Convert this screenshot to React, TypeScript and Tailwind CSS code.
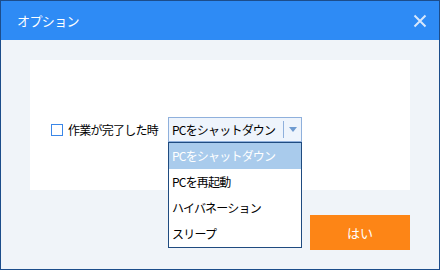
import React from 'react';

const options = ['PCをシャットダウン', 'PCを再起動', 'ハイバネーション', 'スリープ'];

export default function App() {
  return (
    <div
      className="w-[440px] h-[270px] border border-[#1c4d8b] flex flex-col bg-[#f0f4f9] text-[12px] text-black"
      style={{ fontFamily: '"Noto Sans CJK JP", "Noto Sans", sans-serif' }}
    >
      {/* タイトルバー */}
      <div className="h-[39px] bg-[#2e8bf5] flex items-center justify-between pl-[16px] pr-[12px]">
        <span className="text-white text-[13px] tracking-[-0.6px]">オプション</span>
        <svg width="14" height="14" viewBox="0 0 14 14">
          <path d="M1.5 1.5 L12.5 12.5 M12.5 1.5 L1.5 12.5" stroke="#d6e7fc" strokeWidth="2" />
        </svg>
      </div>

      <div className="flex-1 px-[29px] pt-[20px] flex flex-col">
        {/* 設定パネル */}
        <div className="h-[130px] bg-white pl-[21px] pt-[57px]">
          <div className="flex items-center">
            <span className="w-[12px] h-[12px] border border-[#3b87e8] bg-white" />
            <span className="ml-[5px] w-[100px] leading-[16px] tracking-[-0.75px]">作業が完了した時</span>
            <div className="relative">
              <div className="w-[134px] h-[25px] border border-[#8fb0dc] bg-[#eef4fc] flex items-center">
                <span className="pl-[3px] flex-1 leading-[16px] whitespace-nowrap tracking-[-0.8px]">PCをシャットダウン</span>
                <span className="w-px h-[17px] bg-[#8fb0dc]" />
                <span className="w-[17px] flex justify-center">
                  <svg width="8" height="5" viewBox="0 0 8 5">
                    <path d="M0 0 H8 L4 5 Z" fill="#6f9bd0" />
                  </svg>
                </span>
              </div>
              {/* ドロップダウンリスト */}
              <div className="absolute left-0 top-full w-[134px] border border-[#1f4b80] bg-white z-10">
                {options.map((o, i) => (
                  <div
                    key={o}
                    className={
                      'h-[26px] flex items-center pl-[3px] leading-[16px] whitespace-nowrap tracking-[-0.8px] ' +
                      (i === 0 ? 'bg-[#a9cbec] text-white' : '')
                    }
                  >
                    {o}
                  </div>
                ))}
              </div>
            </div>
          </div>
        </div>

        <div className="flex justify-end mt-[25px]">
          <button className="w-[100px] h-[35px] bg-[#fd8516] text-white text-[13px]">はい</button>
        </div>
      </div>
    </div>
  );
}
